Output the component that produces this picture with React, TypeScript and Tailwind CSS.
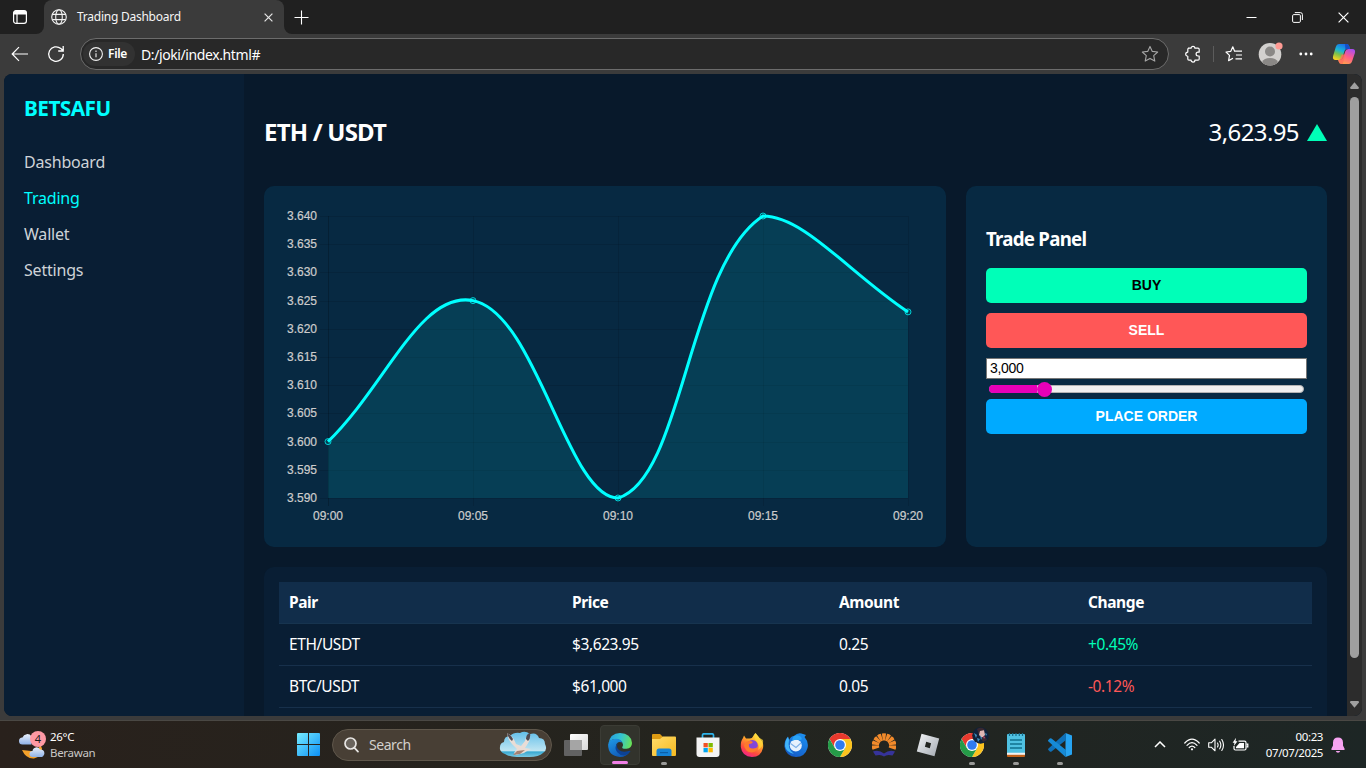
import type { ReactNode } from "react";

const NAV = [
  { label: "Dashboard", cls: "text-[#cfd3d8] tracking-[-0.2px]" },
  { label: "Trading", cls: "text-[#00ffff] tracking-[-0.2px]" },
  { label: "Wallet", cls: "text-[#cfd3d8] tracking-[-0.2px]" },
  { label: "Settings", cls: "text-[#cfd3d8] tracking-[-0.2px]" },
];

const ROWS = [
  { pair: "ETH/USDT", price: "$3,623.95", amount: "0.25", change: "+0.45%", cls: "text-[#00ffb8]" },
  { pair: "BTC/USDT", price: "$61,000", amount: "0.05", change: "-0.12%", cls: "text-[#ff5757]" },
];

const LABELS = ["09:00", "09:05", "09:10", "09:15", "09:20"];
const VALUES = [3600, 3625, 3590, 3640, 3623];
const TICKS = [3640, 3635, 3630, 3625, 3620, 3615, 3610, 3605, 3600, 3595, 3590];

const LEFT = 64;
const TOP = 30;
const BOTTOM = 312;
const STEP = 145;
const RIGHT = LEFT + STEP * 4;
const yOf = (v: number) => TOP + ((3640 - v) / 50) * (BOTTOM - TOP);

function splinePath() {
  const pts = VALUES.map((v, i) => ({ x: LEFT + i * STEP, y: yOf(v) }));
  const clamp = (v: number) => Math.min(BOTTOM, Math.max(TOP, v));
  const ctl = pts.map((p, i) => {
    const a = pts[Math.max(0, i - 1)];
    const b = pts[Math.min(pts.length - 1, i + 1)];
    const d1 = Math.hypot(p.x - a.x, p.y - a.y);
    const d2 = Math.hypot(b.x - p.x, b.y - p.y);
    const fa = (0.4 * d1) / (d1 + d2);
    const fb = (0.4 * d2) / (d1 + d2);
    return {
      px: p.x - fa * (b.x - a.x),
      py: clamp(p.y - fa * (b.y - a.y)),
      nx: p.x + fb * (b.x - a.x),
      ny: clamp(p.y + fb * (b.y - a.y)),
    };
  });
  let d = `M${pts[0].x} ${pts[0].y}`;
  for (let i = 1; i < pts.length; i++) {
    d += ` C${ctl[i - 1].nx} ${ctl[i - 1].ny} ${ctl[i].px} ${ctl[i].py} ${pts[i].x} ${pts[i].y}`;
  }
  return d;
}

function PriceChart() {
  const line = splinePath();
  return (
    <svg width="682" height="361" viewBox="0 0 682 361" className="block font-['Liberation_Sans']">
      {TICKS.map((t) => (
        <g key={t}>
          <line x1={LEFT - 8} x2={RIGHT} y1={Math.round(yOf(t)) + 0.5} y2={Math.round(yOf(t)) + 0.5} stroke="#000" strokeOpacity="0.1" />
          <text x="53" y={Math.round(yOf(t)) + 4} textAnchor="end" fontSize="12" fill="#cccccc" stroke="#cccccc" strokeWidth="0.2">
            {(t / 1000).toFixed(3)}
          </text>
        </g>
      ))}
      {LABELS.map((l, i) => (
        <g key={l}>
          <line x1={LEFT + i * STEP + 0.5} x2={LEFT + i * STEP + 0.5} y1={TOP} y2={BOTTOM + 8} stroke="#000" strokeOpacity={i === 0 ? 0.2 : 0.1} />
          <text x={LEFT + i * STEP} y="334" textAnchor="middle" fontSize="12" fill="#cccccc" stroke="#cccccc" strokeWidth="0.2">
            {l}
          </text>
        </g>
      ))}
      <path d={`${line} L${RIGHT} ${BOTTOM} L${LEFT} ${BOTTOM} Z`} fill="#00ffff" fillOpacity="0.1" />
      <path d={line} fill="none" stroke="#00ffff" strokeWidth="3" />
      {VALUES.map((v, i) => (
        <circle key={i} cx={LEFT + i * STEP} cy={yOf(v)} r="3" fill="#00ffff" fillOpacity="0.1" stroke="#00ffff" strokeOpacity="0.75" />
      ))}
    </svg>
  );
}

function TitleBar() {
  return (
    <div className="flex h-[34px] w-full bg-[#202020]">
      <div className="w-11 bg-[#3b3b3b]">
        <div className="flex h-full items-center justify-center rounded-br-lg bg-[#202020] pr-1">
          <svg width="16" height="16" viewBox="0 0 16 16" fill="none" stroke="#fff" strokeWidth="1.2">
            <rect x="1.6" y="1.6" width="12.8" height="12.8" rx="2.4" />
            <path d="M2 3.6Q2 2 4 2H12Q14 2 14 3.6V5H2Z" fill="#fff" />
            <path d="M5 5v9" />
          </svg>
        </div>
      </div>
      <div className="flex w-60 items-center rounded-t-lg bg-[#3b3b3b] pl-[7px]">
        <svg width="16" height="16" viewBox="0 0 16 16" fill="none" stroke="#f2f2f2" strokeWidth="1.1">
          <circle cx="8" cy="8" r="7.3" />
          <ellipse cx="8" cy="8" rx="3.3" ry="7.3" />
          <path d="M1.3 5.4h13.4M1.3 10.6h13.4" />
        </svg>
        <span className="ml-[10px] flex-1 text-[12px] tracking-[-0.25px] text-[#f5f5f5]">Trading Dashboard</span>
        <svg width="9" height="9" viewBox="0 0 9 9" stroke="#e6e6e6" strokeWidth="1.2" className="mr-[11px]">
          <path d="M0.6 0.6l7.8 7.8M8.4 0.6L0.6 8.4" />
        </svg>
      </div>
      <div className="w-9 bg-[#3b3b3b]">
        <div className="flex h-full items-center rounded-bl-lg bg-[#202020] pl-[10px]">
          <svg width="15" height="15" viewBox="0 0 15 15" stroke="#fff" strokeWidth="1.1">
            <path d="M7.5 0.5v14M0.5 7.5h14" />
          </svg>
        </div>
      </div>
      <div className="flex flex-1 items-center justify-end">
        <div className="flex w-[46px] justify-center">
          <svg width="11" height="11" viewBox="0 0 11 11" stroke="#fff"><path d="M0.5 5.5h10" /></svg>
        </div>
        <div className="flex w-[46px] justify-center">
          <svg width="11" height="11" viewBox="0 0 11 11" fill="none" stroke="#fff">
            <rect x="0.6" y="2.6" width="7.8" height="7.8" rx="1.2" />
            <path d="M2.8 0.6H8.4Q10.4 0.6 10.4 2.6V8" />
          </svg>
        </div>
        <div className="flex w-[46px] justify-center">
          <svg width="11" height="11" viewBox="0 0 11 11" stroke="#fff" strokeWidth="1.2"><path d="M0.6 0.6l9.8 9.8M10.4 0.6L0.6 10.4" /></svg>
        </div>
      </div>
    </div>
  );
}

function Toolbar() {
  return (
    <div className="flex h-10 w-full items-center bg-[#3b3b3b]">
      <div className="flex w-10 justify-center">
        <svg width="18" height="16" viewBox="0 0 18 16" fill="none" stroke="#fff" strokeWidth="1.2"><path d="M17 8H1.5M8 1.2L1.2 8L8 14.8" /></svg>
      </div>
      <div className="flex w-8 justify-center">
        <svg width="18" height="18" viewBox="0 0 18 18" fill="none" stroke="#fff" strokeWidth="1.3">
          <path d="M16.3 9A7.3 7.3 0 1 1 13.8 3.6L16 5.6M16.2 1v5h-5" />
        </svg>
      </div>
      <div className="ml-2 flex h-8 w-[1089px] items-center rounded-full border border-[#6c6c6c] bg-[#282828]">
        <div className="ml-[2px] flex h-6 w-[52px] items-center rounded-full bg-[#323232] pl-[6px]">
          <svg width="14" height="14" viewBox="0 0 14 14" fill="none" stroke="#f2f2f2" strokeWidth="1.1">
            <circle cx="7" cy="7" r="6.4" />
            <path d="M7 6.2v4M7 3.6v1.3" />
          </svg>
          <span className="ml-[5px] text-[12px] font-semibold tracking-[-0.3px] text-white">File</span>
        </div>
        <span className="ml-[6px] flex-1 text-[14px] tracking-[-0.4px] text-white">D:/joki/index.html#</span>
        <svg width="18" height="18" viewBox="0 0 18 18" fill="none" stroke="#a6a6a6" strokeWidth="1.1" strokeLinejoin="round" className="mr-[9px]">
          <path d="M9 1.4l2.3 5 5.4.6-4 3.7 1.1 5.4L9 13.4l-4.8 2.7 1.1-5.4-4-3.7 5.4-.6z" />
        </svg>
      </div>
      <div className="ml-2 flex w-8 justify-center">
        <svg width="18" height="18" viewBox="0 0 18 18" fill="none" stroke="#fff" strokeWidth="1.2" strokeLinejoin="round">
          <path d="M4 3.2H7.1A1.9 1.9 0 0 1 10.9 3.2H14Q15.2 3.2 15.2 4.4V7.2H14A1.9 1.9 0 0 0 14 11H15.2V14Q15.2 15.2 14 15.2H10.9A1.9 1.9 0 0 1 7.1 15.2H5Q3.8 15.2 3.8 14V11.3A2.1 2.1 0 0 1 3.8 7.1V4.4Q3.8 3.2 5 3.2" />
        </svg>
      </div>
      <div className="ml-1 h-4 w-px bg-[#5c5c5c]" />
      <div className="ml-1 flex w-8 justify-center">
        <svg width="18" height="18" viewBox="0 0 18 18" fill="none" stroke="#fff" strokeWidth="1.2" strokeLinejoin="round">
          <path d="M9.6 6.2L7.8 1.8 5.8 6.3 1 7l3.5 3.4-.9 5.2 4.4-2.4M9 6.2H17M11 10H17M10.5 13.8H17" />
        </svg>
      </div>
      <div className="ml-1 flex w-8 justify-center">
        <svg width="26" height="24" viewBox="0 0 26 24">
          <circle cx="13" cy="12.3" r="11.3" fill="#d2d0ce" />
          <circle cx="13" cy="9.5" r="5" fill="#8a8886" />
          <path d="M5 20.2Q7 16 13 16T21 20.2Q17.5 23.6 13 23.6T5 20.2Z" fill="#8a8886" />
          <circle cx="22" cy="4" r="3.6" fill="#ff9b94" />
        </svg>
      </div>
      <div className="ml-1 flex w-8 justify-center">
        <svg width="14" height="4" viewBox="0 0 14 4" fill="#fff"><circle cx="1.8" cy="2" r="1.4" /><circle cx="7" cy="2" r="1.4" /><circle cx="12.2" cy="2" r="1.4" /></svg>
      </div>
      <div className="ml-[6px] flex w-8 justify-center">
        <svg width="24" height="24" viewBox="0 0 24 24">
          <defs>
            <linearGradient id="cpA" x1="0.6" y1="0" x2="0.2" y2="1"><stop offset="0" stopColor="#1a6fe8" /><stop offset="0.4" stopColor="#19b6d8" /><stop offset="0.65" stopColor="#7cc04b" /><stop offset="1" stopColor="#ffd21f" /></linearGradient>
            <linearGradient id="cpB" x1="0.8" y1="0" x2="0.3" y2="1"><stop offset="0" stopColor="#a64df0" /><stop offset="0.5" stopColor="#ff5c8a" /><stop offset="1" stopColor="#ffa24a" /></linearGradient>
          </defs>
          <path d="M7.2 2H14.3Q16.5 2 17.2 4.2L18 7H15Q13 7 12.4 9L10.7 15Q9.8 18 7.3 18H3.7Q0.2 18 1.1 14L3.8 5Q4.7 2 7.2 2Z" fill="url(#cpA)" />
          <path d="M13 2h1.5q2.1 0 2.8 2.2L18 7h-3q-1 0-1.6.6z" fill="#154fc9" />
          <path d="M16.8 22H9.7Q7.5 22 6.8 19.8L6.2 18H8.4Q10.6 18 11.3 15.6L13.2 9.6Q14 7 16.5 7H20.3Q23.8 7 22.9 11L20.2 19Q19.3 22 16.8 22Z" fill="url(#cpB)" />
          <path d="M9.7 12.5L8.6 16Q8 18 6.2 18l.6 1.8Q7.5 22 9.7 22h1l2.7-9.5z" fill="#ff6d5d" opacity="0.8" />
        </svg>
      </div>
    </div>
  );
}

function Sidebar() {
  return (
    <aside className="w-60 shrink-0 bg-[#091e34] px-5 pt-5">
      <div className="flex h-[30px] items-center text-[20.8px] font-bold tracking-[-0.55px] text-[#00ffff]">BETSAFU</div>
      <nav className="mt-5 flex flex-col">
        {NAV.map((n) => (
          <a key={n.label} className={`flex h-9 items-center text-[16px] ${n.cls}`}>{n.label}</a>
        ))}
      </nav>
    </aside>
  );
}

function TradePanel() {
  return (
    <section className="w-[361px] rounded-[10px] bg-[#072942] px-5 pt-[38px] font-['Liberation_Sans']">
      <h3 className="flex h-[30px] items-center font-['Noto_Sans'] text-[18.7px] font-bold tracking-[-0.75px] text-white">Trade Panel</h3>
      <div className="mt-[14px] flex h-[35px] items-center justify-center rounded-[5px] bg-[#00ffb8] text-[14px] font-bold text-black">BUY</div>
      <div className="mt-[10px] flex h-[35px] items-center justify-center rounded-[5px] bg-[#ff5757] text-[14px] font-bold text-white">SELL</div>
      <div className="mt-[10px] flex h-[21px] items-center border border-[#767676] bg-white px-[3px] text-[14px] tracking-[-0.3px] text-black">3,000</div>
      <div className="flex h-5 items-center pl-[3px] pr-[3px]">
        <div className="flex h-2 w-full items-center rounded-full border border-[#b2b2b2] bg-[#efefef]">
          <div className="-ml-px h-2 w-12 rounded-l-full bg-[#e600b8]" />
          <div className="h-[15px] w-[15px] shrink-0 rounded-full bg-[#e600b8]" />
        </div>
      </div>
      <div className="flex h-[35px] items-center justify-center rounded-[5px] bg-[#00aaff] text-[14px] font-bold text-white">PLACE ORDER</div>
    </section>
  );
}

function Trades() {
  return (
    <section className="mt-5 rounded-[10px] bg-[#091e34] p-[15px]">
      <div className="grid h-[42px] grid-cols-[283px_267px_249px_234px] items-center border-b border-[#17344f] bg-[#112d4a] text-[15.5px] font-bold tracking-[-0.4px] text-white">
        <span className="pl-[10px]">Pair</span>
        <span className="pl-[10px]">Price</span>
        <span className="pl-[10px]">Amount</span>
        <span className="pl-[10px]">Change</span>
      </div>
      {ROWS.map((r) => (
        <div key={r.pair} className="grid h-[42px] grid-cols-[283px_267px_249px_234px] items-center border-b border-[#17304b] text-[15.5px] tracking-[-0.4px] text-white">
          <span className="pl-[10px]">{r.pair}</span>
          <span className="pl-[10px]">{r.price}</span>
          <span className="pl-[10px]">{r.amount}</span>
          <span className={`pl-[10px] ${r.cls}`}>{r.change}</span>
        </div>
      ))}
      <div className="h-10" />
    </section>
  );
}

function Scrollbar() {
  return (
    <div className="flex w-[15px] flex-col items-center bg-[#2c2c2c]">
      <svg width="9" height="7" viewBox="0 0 9 7" fill="#9f9f9f" className="mt-2"><path d="M4.5 0.3L8.9 5.6Q9 7 8 7H1Q0 7 0.1 5.6Z" /></svg>
      <div className="mt-2 h-[561px] w-[9px] rounded-full bg-[#9f9f9f]" />
      <svg width="9" height="7" viewBox="0 0 9 7" fill="#9f9f9f" className="mt-[43px]"><path d="M4.5 6.7L8.9 1.4Q9 0 8 0H1Q0 0 0.1 1.4Z" /></svg>
    </div>
  );
}

function Slot({ children, active, dot }: { children: ReactNode; active?: boolean; dot?: boolean }) {
  return (
    <div className="flex h-12 w-11 items-center justify-center">
      <div className={active ? "relative flex h-10 w-10 items-center justify-center rounded border border-[#3b3c35] bg-[#32332c]" : "relative flex h-10 w-10 items-center justify-center"}>
        {children}
        {active && <div className="absolute bottom-0 left-[11px] h-[3px] w-4 rounded-full bg-[#f07fe6]" />}
        {dot && <div className="absolute bottom-0 left-[17px] h-[3px] w-[6px] rounded-full bg-[#9a9a98]" />}
      </div>
    </div>
  );
}

function ChromeLogo() {
  return (
    <svg width="24" height="24" viewBox="0 0 24 24">
      <circle cx="12" cy="12" r="12" fill="#fff" />
      <path d="M12 6H22.4A12 12 0 0 0 1.6 6L6.8 15Z" fill="#e8392d" />
      <path d="M17.2 15L12 24A12 12 0 0 0 22.4 6H12Z" fill="#fcc31e" />
      <path d="M6.8 15L1.6 6A12 12 0 0 0 12 24L17.2 15Z" fill="#259b48" />
      <circle cx="12" cy="12" r="6" fill="#fff" />
      <circle cx="12" cy="12" r="4.8" fill="#2f7bf0" />
    </svg>
  );
}

function Taskbar() {
  return (
    <div className="flex h-12 w-full items-center border-t border-[#4a4844] bg-linear-to-r from-[#29211c] via-[#24241e] to-[#1d2625]">
      <div className="flex w-[286px] items-center pl-[18px]">
        <svg width="28" height="30" viewBox="0 0 28 30">
          <defs><linearGradient id="cl" x1="0" y1="0" x2="0" y2="1"><stop offset="0" stopColor="#e9f0fc" /><stop offset="1" stopColor="#8fb2e8" /></linearGradient></defs>
          <path d="M22 14q-1 8-9 7-4-.5-9-1 4 9 12 8.500 8-1.500 8-10z" fill="#f5a12a" />
          <path d="M4.500 14.500a3.500 3.500 0 0 1 0-7 5 5 0 0 1 9-1v8z" fill="url(#cl)" />
          <path d="M14.500 27a3 3 0 0 1 0-6 4 4 0 0 1 7.500-1.500A3.800 3.800 0 1 1 22 27z" fill="url(#cl)" />
          <circle cx="20" cy="9" r="8" fill="#ff99a4" />
          <text x="20" y="13" textAnchor="middle" fontSize="11" fill="#1c1c1c" fontFamily="Noto Sans">4</text>
        </svg>
        <div className="ml-1 flex flex-col text-[11.500px] leading-4 tracking-[-0.3px]">
          <span className="text-white">26°C</span>
          <span className="text-[#c9c7c5]">Berawan</span>
        </div>
      </div>
      <Slot>
        <svg width="23" height="23" viewBox="0 0 23 23">
          <defs><linearGradient id="win" x1="0" y1="0" x2="1" y2="1"><stop offset="0" stopColor="#76ecff" /><stop offset="1" stopColor="#0c8ff5" /></linearGradient></defs>
          <path d="M0 1Q0 0 1 0H11V11H0ZM12 0H22Q23 0 23 1V11H12ZM0 12H11V23H1Q0 23 0 22ZM12 12H23V22Q23 23 22 23H12Z" fill="url(#win)" />
        </svg>
      </Slot>
      <div className="mx-[2px] flex h-8 w-[220px] items-center rounded-full border border-[#5f574b] bg-[#483f35] pl-[11px]">
        <svg width="15" height="16" viewBox="0 0 15 16" fill="none" stroke="#e8e6e4" strokeWidth="1.7" strokeLinecap="round">
          <circle cx="6.500" cy="6.500" r="5.500" fill="#6a645d" />
          <path d="M10.500 10.800L14 14.600" />
        </svg>
        <span className="ml-[10px] flex-1 text-[14px] tracking-[-0.45px] text-[#d3d0cc]">Search</span>
        <svg width="48" height="28" viewBox="0 0 48 28" className="mr-1">
          <defs><linearGradient id="sky" x1="0" y1="0" x2="0" y2="1"><stop offset="0" stopColor="#62bfe9" /><stop offset="0.75" stopColor="#bfe5f2" /><stop offset="0.8" stopColor="#38a9d2" /><stop offset="1" stopColor="#7cc9e2" /></linearGradient></defs>
          <path d="M6 23Q0 21 1 16 1 12 5 11 5 5 11 5 15 1 21 2 26-1 31 3 38 1 40 7 46 7 46 13 49 19 44 22 40 26 30 26H18Q10 26 6 23Z" fill="url(#sky)" />
          <path d="M8 2q6 3 9 11l5 2 4-5q1-6 5-7 1 6-3 11l-2 3 6 1-4 2-3 2-8 2-2-2 3-4-5-5Q9 9 8 2z" fill="#e9ddd6" />
          <path d="M8 2q4 2 6 6l-1 2Q9 7 8 2zM27 8q0-5 4-6 1 5-2 8z" fill="#4e4b53" />
          <path d="M14 24l4-4 8-1-5 4z" fill="#a68273" />
        </svg>
      </div>
      <Slot>
        <svg width="24" height="22" viewBox="0 0 24 22">
          <defs><linearGradient id="tv" x1="0" y1="0" x2="1" y2="1"><stop offset="0" stopColor="#fff" /><stop offset="1" stopColor="#d8d8d8" /></linearGradient></defs>
          <rect x="6" width="18" height="16" rx="1" fill="url(#tv)" />
          <rect y="6" width="18" height="16" rx="1" fill="#626262" />
          <path d="M6 6H18V16H6Z" fill="#a5a5a5" />
        </svg>
      </Slot>
      <Slot active>
        <svg width="24" height="24" viewBox="0 0 24 24">
          <defs>
            <linearGradient id="eA" x1="0" y1="0.4" x2="1" y2="0.6"><stop offset="0" stopColor="#259ee0" /><stop offset="0.5" stopColor="#35c4cf" /><stop offset="1" stopColor="#69e354" /></linearGradient>
            <linearGradient id="eB" x1="0" y1="0" x2="0.6" y2="1"><stop offset="0" stopColor="#1f9be8" /><stop offset="1" stopColor="#1058b4" /></linearGradient>
          </defs>
          <path d="M0.300 11Q2 0 12 0 23 0.300 24 10 24 15 18.500 15.800 14 16 14.200 14.500 16 12 14.300 9.500 12 6 7 6 2 6.500 0.300 11Z" fill="url(#eA)" />
          <path d="M0.100 11.500Q1.500 6 8 5.800 13 6 14.500 9.500 9 7.500 8 12.500 8 18 13 19.500 18 21 22.200 18 18.500 24 12 24 0 23 0.100 11.500Z" fill="url(#eB)" />
          <path d="M8 12.500Q6.500 16 9.500 19.500 12.500 23 17 22.500 20.500 21 22.500 18.200 22 17.400 20.500 18 14.500 20 11 17 7.500 14 10 10Q8.300 11 8 12.500Z" fill="#0c4295" />
        </svg>
      </Slot>
      <Slot dot>
        <svg width="24" height="22" viewBox="0 0 24 22">
          <defs><linearGradient id="fo" x1="0" y1="0" x2="1" y2="1"><stop offset="0" stopColor="#ffdc6b" /><stop offset="1" stopColor="#f5b920" /></linearGradient></defs>
          <path d="M0 1Q0 0 1 0H8L11 3V7H0Z" fill="#dd9b13" />
          <path d="M0 5H8L11 2.500H23Q24 2.500 24 3.500V21Q24 22 23 22H1Q0 22 0 21Z" fill="url(#fo)" />
          <path d="M4.500 22V17Q4.500 14.500 7 14.500H17Q19.500 14.500 19.500 17V22Z" fill="#1583d6" />
          <path d="M8 18h8v1.200H8z" fill="#0b5fa8" />
        </svg>
      </Slot>
      <Slot>
        <svg width="24" height="24" viewBox="0 0 24 24">
          <path d="M6.500 5V2Q6.500 0.800 8 0.800H16Q17.500 0.800 17.500 2V5" fill="none" stroke="#2fb4ea" strokeWidth="1.700" />
          <path d="M0.500 4.500H23.500V21Q23.500 24 20.500 24H3.500Q0.500 24 0.500 21Z" fill="#f4f4f4" />
          <path d="M7.500 10h4.300v4.300H7.500z" fill="#f25022" /><path d="M12.500 10h4.300v4.300h-4.300z" fill="#7fba00" /><path d="M7.500 15h4.300v4.300H7.500z" fill="#00a4ef" /><path d="M12.500 15h4.300v4.300h-4.300z" fill="#ffb900" />
        </svg>
      </Slot>
      <Slot>
        <svg width="24" height="24" viewBox="0 0 24 24">
          <defs><linearGradient id="ff" x1="0.800" y1="0" x2="0.300" y2="1"><stop offset="0" stopColor="#fff14a" /><stop offset="0.400" stopColor="#ffa52a" /><stop offset="0.750" stopColor="#ff4a3f" /><stop offset="1" stopColor="#f0208f" /></linearGradient></defs>
          <path d="M15.500 0Q18 3 19.500 5L20.500 6.500Q24 10 23 15 21 24 12 24 2 23.500 0.800 14 0.500 8 3 5L4 2.500 6 5.500 9 5.500Q12 6 13 3.500 14 1 15.500 0Z" fill="url(#ff)" />
          <circle cx="12.300" cy="12.500" r="5.500" fill="#8246d8" />
          <path d="M6 9q4-2 7 0-1 2-4 2-1 4 3 4.500 4 .5 6-2 0 5-6 6-7-.5-8-7z" fill="#ff7a2c" />
          <path d="M15.500 0Q13 5 17 9q3 4 1 8 6-4 5-10-3-2-3.500-2z" fill="#ffd83c" opacity="0.700" />
        </svg>
      </Slot>
      <Slot>
        <svg width="24" height="24" viewBox="0 0 24 24">
          <defs><linearGradient id="tb" x1="0.800" y1="0" x2="0.200" y2="1"><stop offset="0" stopColor="#1c8ff0" /><stop offset="1" stopColor="#1458c4" /></linearGradient></defs>
          <path d="M10 3Q14-1 19 1L22 2 20.500 4Q25 9 23.500 15 21 24 12 24 2 23.500 0.500 14 0 8 4 3.500L5 7Q7 3 10 3Z" fill="url(#tb)" />
          <path d="M5 7q-2 9 5 14-8-2-9-8 0-6 3-9z" fill="#41b5fa" />
          <circle cx="11.800" cy="12.500" r="6" fill="#e6f1fd" />
          <path d="M6.500 10.500l5.500 4 5-4.500" fill="none" stroke="#7fb1e8" strokeWidth="1.200" />
          <path d="M10 3q5-2 7 1 2 3-1 3-4-1-8 1 0-3 2-5z" fill="#2aa3f6" />
        </svg>
      </Slot>
      <Slot><ChromeLogo /></Slot>
      <Slot>
        <svg width="24" height="24" viewBox="0 0 24 24">
          {[-100, -75, -50, -25, 0, 25, 50, 75, 100].map((a) => (
            <path key={a} d="M10.800 7.500L9.900 0.600Q12 -0.300 14.100 0.600L13.200 7.500Z" fill="#f28a2b" transform={`rotate(${a} 12 12.500)`} />
          ))}
          <path d="M1 18.500Q7 16.500 12 20.500 17 16.500 23 18.500L20.500 22.500Q15 21 12 23.500 9 21 3.500 22.500Z" fill="#36339a" />
        </svg>
      </Slot>
      <Slot>
        <svg width="24" height="24" viewBox="0 0 24 24">
          <defs><linearGradient id="rb" x1="0" y1="0" x2="1" y2="1"><stop offset="0" stopColor="#f4f6f8" /><stop offset="1" stopColor="#a2a8b0" /></linearGradient></defs>
          <path d="M5.500 0.800L23.200 5.500 18.500 23.200 0.800 18.500ZM10.200 8.800L8.900 13.800 13.800 15.200 15.100 10.200Z" fill="url(#rb)" fillRule="evenodd" />
        </svg>
      </Slot>
      <Slot dot>
        <ChromeLogo />
        <svg width="17" height="17" viewBox="0 0 17 17" className="absolute left-[20px] top-[2px]">
          <circle cx="8.500" cy="8.500" r="8.300" fill="#10213a" />
          <path d="M7 3q3-2 5 0l1 5-3 3-3-3z" fill="#e0b7b4" />
          <path d="M5 2q5-3 8 1l-5 1-1 4zM9 11l4-2 2 4-4 2z" fill="#3a2830" />
          <path d="M2 6l3 2-1 3zM5 11l3 1-2 3zM8 8l2 3-1 2zM13 6l2 1-1 2z" fill="#3f8fc0" />
          <path d="M11 9l2 1-1 2z" fill="#c94f79" />
        </svg>
      </Slot>
      <Slot dot>
        <svg width="18" height="24" viewBox="0 0 18 24">
          <path d="M0 20H18V23Q18 24 17 24H1Q0 24 0 23Z" fill="#c2611a" />
          <path d="M0 19H18V21.800H0Z" fill="#f2f2f2" />
          <path d="M0 2Q0 1 1 1H17Q18 1 18 2V19.800H0Z" fill="#4fc1e2" />
          <path d="M2.500 0v3M5.700 0v3M9 0v3M12.300 0v3M15.500 0v3" stroke="#176d8c" strokeWidth="1.200" />
          <path d="M3 7h12M3 11h12M3 15h12" stroke="#11708f" strokeWidth="1.700" />
        </svg>
      </Slot>
      <Slot dot>
        <svg width="24" height="24" viewBox="0 0 24 24">
          <path d="M17.500 0L24 2.500V21.500L17.500 24Z" fill="#27a4f2" />
          <path d="M17.500 0L18 7 3.500 18.500Q2.500 19 1.800 18.500L0.300 17Q-0.300 16.200 0.500 15.500Z" fill="#0f70b8" />
          <path d="M17.500 24L18 17 3.500 5.500Q2.500 5 1.800 5.500L0.300 7Q-0.300 7.800 0.500 8.500Z" fill="#168ad6" />
        </svg>
      </Slot>
      <div className="flex flex-1 items-center justify-end pr-[21px]">
        <svg width="12" height="7" viewBox="0 0 12 7" fill="none" stroke="#fff" strokeWidth="1.500" className="mr-[18px]"><path d="M1 6l5-5 5 5" /></svg>
        <svg width="16" height="13" viewBox="0 0 16 13" fill="none" stroke="#fff" strokeWidth="1.200" strokeLinecap="round" className="mr-2">
          <path d="M0.800 5Q8-2.800 15.200 5M3 7.300Q8 2 13 7.300M5.200 9.500Q8 6.600 10.800 9.500" />
          <circle cx="8" cy="11.300" r="1.100" fill="#fff" stroke="none" />
        </svg>
        <svg width="17" height="14" viewBox="0 0 17 14" fill="none" stroke="#fff" strokeWidth="1.100" strokeLinecap="round" strokeLinejoin="round" className="mr-[7px]">
          <path d="M0.700 4.800H3.300L7 1.200V12.800L3.300 9.200H0.700ZM9.500 5Q10.700 7 9.500 9M11.700 3.200Q14 7 11.700 10.800M13.800 1.500Q17.200 7 13.800 12.500" />
        </svg>
        <svg width="17" height="14" viewBox="0 0 17 14" fill="none" stroke="#fff" strokeWidth="1.200" className="mr-[17px]">
          <path d="M6.500 3.200H12.500Q14 3.200 14 4.700V10.500Q14 12 12.500 12H3.500Q2 12 2 10.500V8" />
          <path d="M7.500 5H12V10.200H4V9z" fill="#fff" stroke="none" />
          <path d="M14.500 6.200h1.300v2.600h-1.300" />
          <path d="M4-0.200L0.600 4.700H2.500L1.800 8 5.500 3.200H3.500Z" fill="#fff" stroke="none" />
        </svg>
        <div className="flex flex-col items-end text-[11.500px] leading-4 tracking-[-0.4px] text-white">
          <span>00:23</span>
          <span>07/07/2025</span>
        </div>
        <svg width="14" height="16" viewBox="0 0 14 16" fill="#f7a3f1" className="ml-2">
          <path d="M7 0.500Q11.800 0.500 12 5.500V8.500L13.700 12Q13.800 13 13 13H1Q0.200 13 0.300 12L2 8.500V5.500Q2.200 0.500 7 0.500ZM4.800 14H9.200Q8.700 15.700 7 15.700T4.800 14Z" />
        </svg>
      </div>
    </div>
  );
}

export default function App() {
  return (
    <div className="flex h-[768px] w-[1366px] flex-col overflow-hidden bg-[#3b3b3b] font-['Noto_Sans',sans-serif]">
      <TitleBar />
      <Toolbar />
      <div className="mx-1 mb-1 flex h-[642px] overflow-hidden rounded-lg bg-[#08192b]">
        <Sidebar />
        <main className="h-[642px] w-[1103px] shrink-0 overflow-hidden px-5 pt-5">
          <header className="flex h-[92px] items-center justify-between pb-[16px]">
            <h2 className="text-[24px] font-bold tracking-[-0.8px] text-white">ETH / USDT</h2>
            <div className="flex items-center text-[24px] tracking-[-0.6px] text-white">
              3,623.95
              <svg width="20" height="17" viewBox="0 0 20 17" className="ml-2"><path d="M10 0L20 17H0Z" fill="#00ffb8" /></svg>
            </div>
          </header>
          <div className="flex h-[361px] gap-5">
            <section className="w-[682px] rounded-[10px] bg-[#072942]">
              <PriceChart />
            </section>
            <TradePanel />
          </div>
          <Trades />
        </main>
        <Scrollbar />
      </div>
      <Taskbar />
    </div>
  );
}
